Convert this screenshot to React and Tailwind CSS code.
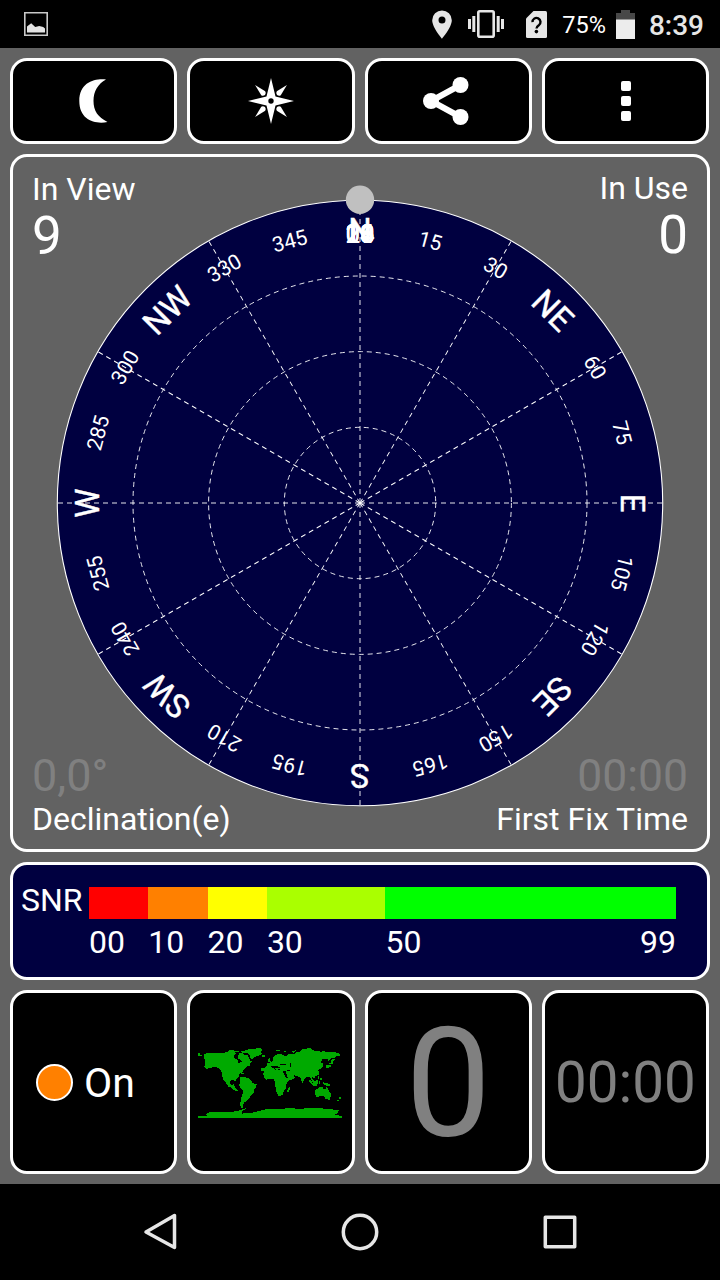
import React from "react";

const CARD = "rounded-[17px] border-[3px] border-white";

const LABELS = [
  [0, "N"], [15, "15"], [30, "30"], [45, "NE"], [60, "60"], [75, "75"],
  [90, "E"], [105, "105"], [120, "120"], [135, "SE"], [150, "150"], [165, "165"],
  [180, "S"], [195, "195"], [210, "210"], [225, "SW"], [240, "240"], [255, "255"],
  [270, "W"], [285, "285"], [300, "300"], [315, "NW"], [330, "330"], [345, "345"],
];

const SATELLITES = ["10", "11", "14", "16", "18", "20", "08", "26", "03"];

const SPOKES = [0, 30, 60, 90, 120, 150, 180, 210, 240, 270, 300, 330];

const SNR = [
  ["00", "bg-[#ff0000]"],
  ["10", "bg-[#ff8000]"],
  ["20", "bg-[#ffff00]"],
  ["30", "bg-[#aaff00]"],
  ["50", "bg-[#00ff00]"],
];

function Compass() {
  return (
    <svg width="608" height="640" viewBox="-304 -320 608 640" className="shrink-0">
      <circle r="302.7" fill="#000040" stroke="#fff" strokeWidth="1.1" />
      <g fill="none" stroke="#fff" strokeWidth="0.9" strokeDasharray="5 4">
        {[75.7, 151.4, 227].map((r) => (
          <circle key={r} r={r} />
        ))}
        {SPOKES.map((a) => (
          <line key={a} x1="0" y1="0" x2="0" y2="-302" transform={`rotate(${a})`} />
        ))}
      </g>
      <g fill="#fff" textAnchor="middle" fontFamily="Roboto, sans-serif">
        {LABELS.map(([a, t]) => {
          const letter = /[A-Z]/.test(t);
          return (
            <text
              key={a}
              y={letter ? -261 : -264}
              fontSize={letter ? 33 : 21}
              stroke="#fff"
              strokeWidth={letter ? 0.4 : 0}
              transform={`rotate(${a})`}
            >
              {t}
            </text>
          );
        })}
        {SATELLITES.map((t) => (
          <text key={t} y="-260.5" fontSize="26">
            {t}
          </text>
        ))}
      </g>
      <circle cy="-303.3" r="14.2" fill="#c0c0c0" />
    </svg>
  );
}

function WorldMap() {
  return (
    <svg width="160" height="85" viewBox="0 0 480 255" fill="#00aa00" shapeRendering="crispEdges">
      <path d="M24 39h5v6h6v3h-11zM42 42l10-3h42l8 3h26l4-6 6 3-2 7 8-2 6 10-8 4 4 10 14-2-4-10 10 2-6-14 14 2 6 12 2 4 6 3-8 6 2 5-12 4-8 9-4 8-8 4-3 8-6 6-3 10-6-5h-8l-4 6 3 9 9-2 2 6 5 8 6 3-3 4-10-3-6-7-10-4-4-6-6-10-4-2-5-12-2-14-4-8-10-6h-14l-12 3-8 4 3-5-8-3 4-4z" />
      <path d="M165 31l10-3h8l10-2 14-2h8l3 6-3 4 1 6-6 6-10 2-8 5-4 5-6-5-3-8-6-7h-14l-6-4zM92 38h12v3h-12zM106 36l12-3v-3h14v3h16v4h-14l-4 4h-24zM112 42h10v3h-10zM150 37l12 4 6 6 4 8-4 9 8 2-3 5-8-3-10 4 2-8-8-6-8-2 5-5-6-6h8z" />
      <path d="M132 90h12v3h8v4h-8v-4h-12zM154 98h10v4h-10zM216 46h9v4h-9z" />
      <path d="M152 112l8-2 14 4 10 6 3 8 14 5-2 8-5 6-2 12-8 6-5 10-8 8-8 4-4 10 2 6h-8l-2-12 4-18 4-14v-8l-8-8-3-10 4-6z" />
      <path d="M231 85l9-2h12l4 5 8 2h14l4 8 4 10 5 6h11l-7 12-7 9v12l-6 8-2 8-6 5h-8l-5-10-2-12-2-10-2-14-4-6h-8l-12 3-8-6-2-12 4-10z" />
      <path d="M295 146l7-5v6l-4 9h-5zM234 58h5v-5h3v8l5 5h-10zM233 70h7v12h-8zM244 66l6-6v-8l6-6 10-6 14 4 6 4 8-2v-6l22 2 4-7 8 2 8-6 16-6h14l6 6 20 4 12-2 14 4h22l12 4v6h-12l-3 6h-10l-8 10-4 1 2-9-6 2-12 1-5 8 8 6-2 8-6 6-8 3 3 8-2 8-10 5-2 4-6-2v6l6 6 6 10-5 1-7-8-5-12-8-6-6 2-8 12-3 6-4-10-4-8-8-3-10-2 3 8-14 8-8-10-6-12v-8h-14l-2-6-8 2-2 4-8-8-6-4v6l4 6-4 2-8-9-12 5-6 3h-7v-8h8z" />
      <path d="M258 31h14v3h-14zM308 34l10-4v4l-8 5zM338 28h8v3h-8zM282 34h8v3h-8zM382 34h10v4h-10zM357 119h6l10 14-4 3-8-9zM375 128l8-9 4 3-3 12-8-1zM371 136h12v3h-12zM388 122h4v10h-4zM386 107h4v10h-4zM392 114h5v7h-5zM402 127l12 2 8 5v5l-10-2-10-5zM414 79h5v6h-5zM428 56h8v4l-6 4v8h-4v-10zM420 68h5v5h-5zM411 76h13v4h-10v4h-6z" />
      <path d="M378 151l8-6 6-4h8v4l8 3 3-8 5 6 4 9 6 8-2 8-6 7h-8l-6-8-8-2-10 3-6 2-3-12zM416 175h5v4h-5zM450 171h5v6h-5zM444 179h5v4h-5z" />
      <path d="M24 228h30l-8-5 12-4v-3h34l40-1 24-5 4-4 4 3-8 6 2 6 20-1 12-2 16-4 22-6 22-1h32l10-3 22 1 8 4 20-3 30-2 30 2h18l12 3 18 2-6 8-6 5 12 3H459V234H24z" />
      <path d="M166 203h4v4h-4zM158 208h8v3h-8z" />
      <path fill="#000" d="M132 46h14v12h-8l-6-6zM244 77h14l14 5v3h-14l-12-3zM270 71h18v5h-18zM300 68h5v12h-5zM286 92l8 16h-3l-8-14zM293 90h9v4h-7z" />
    </svg>
  );
}

function StatusBar() {
  return (
    <header className="flex h-12 items-center justify-between bg-black pl-6 pr-4">
      <svg width="24" height="24" viewBox="0 0 24 24">
        <path d="M.8.8h22.400v22.400H.8z" fill="none" stroke="#c9c9c9" strokeWidth="1.600" />
        <path d="M3 20.500v-6l4.200-3.300 4 3.800 4-1 4 1 1.800 1.500v4z" fill="#e4e4e4" />
      </svg>
      <div className="flex items-center text-[#e6e6e6]">
        <svg width="20" height="29" viewBox="0 0 20 29" fill="#e6e6e6">
          <path fillRule="evenodd" d="M10 .5A9.8 9.8 0 0 0 .2 10.3C.2 17.5 10 28.700 10 28.700s9.800-11.200 9.800-18.400A9.800 9.800 0 0 0 10 .5zm0 6a3.500 3.500 0 1 1 0 7 3.500 3.500 0 0 1 0-7z" />
        </svg>
        <svg width="36" height="28" viewBox="0 0 36 28" className="ml-4" fill="#e6e6e6">
          <path d="M0 9h3v10H0zM4.300 6h3v16h-3zM28.700 6h3v16h-3zM33 9h3v10h-3z" />
          <rect x="10.300" y="1.300" width="15.400" height="25.400" rx="1.500" fill="none" stroke="#e6e6e6" strokeWidth="2.600" />
        </svg>
        <svg width="21" height="27" viewBox="0 0 21 27" className="ml-[22px]">
          <path d="M7.500 0H19.500Q21 0 21 1.500V25.500Q21 27 19.500 27H1.500Q0 27 0 25.500V7.500z" fill="#e6e6e6" />
          <path d="M6.500 11.200a4 4 0 1 1 6.300 3q-2.300 1.500-2.300 3.300" fill="none" stroke="#000" strokeWidth="2.400" />
          <circle cx="10.400" cy="20.600" r="1.800" />
        </svg>
        <span className="ml-[15px] pt-0.5 text-[23.5px] leading-6 text-white">75%</span>
        <svg width="19" height="29" viewBox="0 0 19 29" className="ml-[10px]">
          <path d="M5 0h9v3h5v7H0V3h5z" fill="#484848" />
          <path d="M0 9.500h19V29H0z" fill="#ececec" />
        </svg>
        <span className="ml-3.5 pt-[3px] text-[28px] font-medium leading-7">8:39</span>
      </div>
    </header>
  );
}

export default function App() {
  return (
    <div className="flex h-[1280px] w-[720px] flex-col overflow-hidden bg-[#626262] font-['Roboto',sans-serif] text-[32px] leading-none text-white">
      <StatusBar />
      <main className="flex flex-1 flex-col gap-2.5 px-2.5 py-2.5">
        <nav className="mr-px grid h-[86px] grid-cols-4 gap-2.5">
          <button className={`${CARD} flex items-center justify-center bg-black`}>
            <svg width="30" height="46" viewBox="0 0 30 46" fill="#fff">
              <path d="M27 1.500C16 .200 .3 4 .3 23S16 46.500 28.500 44C19 39 14.500 33 14.500 23S19 6 27 1.500z" />
            </svg>
          </button>
          <button className={`${CARD} flex items-center justify-center bg-black`}>
            <svg width="46" height="46" viewBox="-23 -23 46 46" fill="#fff">
              <path d="M0-23L4.500-4.500 23 0 4.500 4.500 0 23-4.500 4.500-23 0-4.500-4.500z" />
              {[45, 135, 225, 315].map((a) => (
                <path key={a} transform={`rotate(${a})`} d="M0-22.500L2.800-11Q2.500-9 0-8.500-2.500-9-2.800-11z" />
              ))}
              <circle r="2.700" fill="#000" />
            </svg>
          </button>
          <button className={`${CARD} flex items-center justify-center bg-black pr-[5px]`}>
            <svg width="46" height="48" viewBox="0 0 46 48" fill="#fff">
              <path d="M37.500 8L8 24l29.500 16" fill="none" stroke="#fff" strokeWidth="6" />
              <circle cx="37.500" cy="8" r="8" />
              <circle cx="8" cy="24" r="8" />
              <circle cx="37.500" cy="40" r="8" />
            </svg>
          </button>
          <button className={`${CARD} flex flex-col items-center justify-center gap-[5px] bg-black pl-px`}>
            <span className="size-2.5 rounded-xs bg-white" />
            <span className="size-2.5 rounded-xs bg-white" />
            <span className="size-2.5 rounded-xs bg-white" />
          </button>
        </nav>

        <section className={`${CARD} grid h-[698px] grid-cols-2 grid-rows-2`}>
          <div className="col-span-2 col-start-1 row-span-2 row-start-1 flex items-center justify-center">
            <Compass />
          </div>
          <div className="col-start-1 row-start-1 pl-[19px] pt-4">
            <div>In View</div>
            <div className="mt-[5px] text-[53px]">9</div>
          </div>
          <div className="col-start-2 row-start-1 pr-[19px] pt-[15px] text-right">
            <div>In Use</div>
            <div className="mt-[5px] text-[53px]">0</div>
          </div>
          <div className="col-start-1 row-start-2 self-end pb-3.5 pl-[19px]">
            <div className="text-[45px] text-[#808080]">0,0°</div>
            <div className="mt-[5px]">Declination(e)</div>
          </div>
          <div className="col-start-2 row-start-2 self-end pb-3.5 pr-[19px] text-right">
            <div className="text-[44.5px] text-[#808080]">00:00</div>
            <div className="mt-[5px]">First Fix Time</div>
          </div>
        </section>

        <section className={`${CARD} flex h-[118px] bg-[#000040] pt-[22px]`}>
          <div className="-mt-[3px] w-[76px] pl-2">SNR</div>
          <div className="w-[587px]">
            <div className="grid h-8 grid-cols-[10fr_10fr_10fr_20fr_49fr]">
              {SNR.map(([t, c]) => (
                <div key={t} className={c} />
              ))}
            </div>
            <div className="mt-[7px] grid grid-cols-[10fr_10fr_10fr_20fr_49fr]">
              {SNR.slice(0, 4).map(([t]) => (
                <div key={t}>{t}</div>
              ))}
              <div className="flex justify-between">
                <span>50</span>
                <span>99</span>
              </div>
            </div>
          </div>
        </section>

        <section className="mr-px grid h-[184px] grid-cols-4 gap-2.5">
          <div className={`${CARD} flex items-center gap-[11px] bg-black pl-[23px]`}>
            <span className="size-[37px] rounded-full border-2 border-white bg-[#ff8000]" />
            <span className="pt-[3px] text-[41px]">On</span>
          </div>
          <div className={`${CARD} flex items-center justify-center bg-black pr-0.5`}>
            <WorldMap />
          </div>
          <div className={`${CARD} flex items-center justify-center bg-black pt-[3px] text-[153px] text-[#808080]`}>0</div>
          <div className={`${CARD} flex items-center justify-center bg-black pt-[3px] text-[56.5px] text-[#808080]`}>00:00</div>
        </section>
      </main>

      <footer className="flex h-24 items-center gap-[163px] bg-black pl-[142px]">
        <svg width="36" height="40" viewBox="0 0 36 40" fill="none" stroke="#e6e6e6" strokeWidth="3.500" strokeLinejoin="round">
          <path d="M32.500 3.500v32L4 20z" />
        </svg>
        <svg width="38" height="38" viewBox="0 0 38 38" fill="none" stroke="#e6e6e6" strokeWidth="3.500">
          <circle cx="19" cy="19" r="16.700" />
        </svg>
        <svg width="34" height="34" viewBox="0 0 34 34" className="ml-px" fill="none" stroke="#e6e6e6" strokeWidth="3.500" strokeLinejoin="round">
          <path d="M2.300 2.300h29.400v29.400H2.300z" />
        </svg>
      </footer>
    </div>
  );
}
